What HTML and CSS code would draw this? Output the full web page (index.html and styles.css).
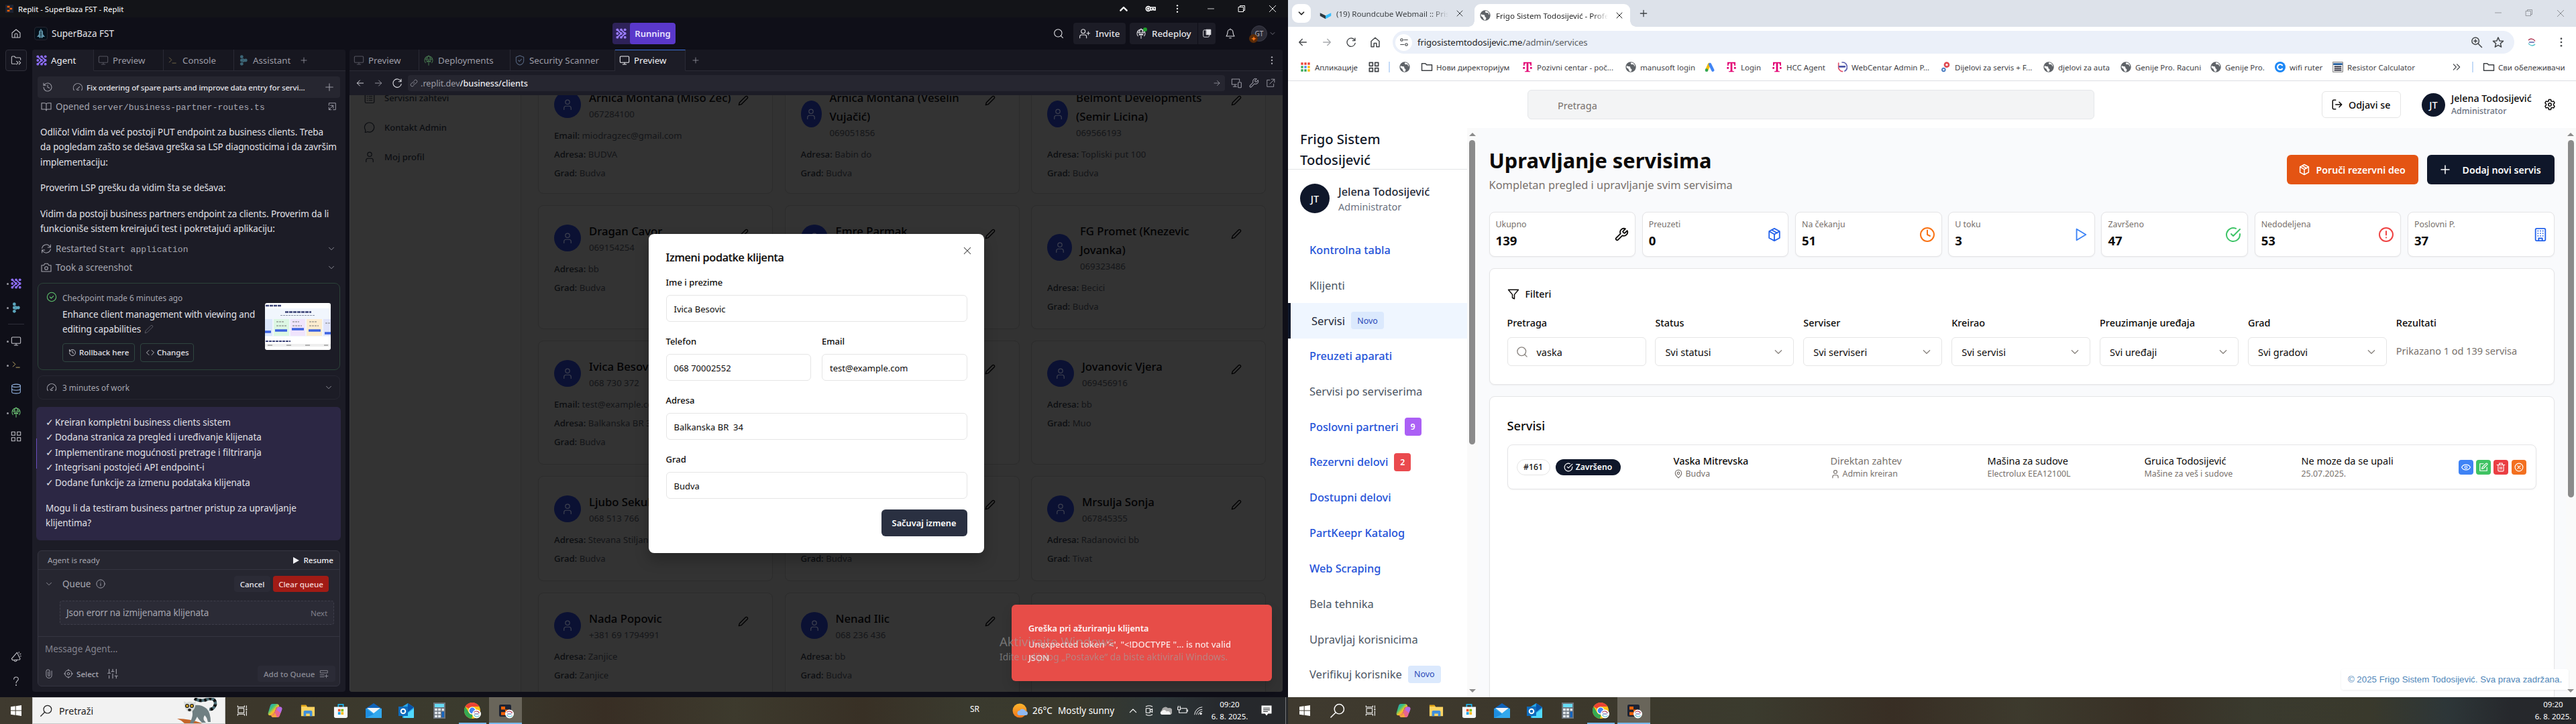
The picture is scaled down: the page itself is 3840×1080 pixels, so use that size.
FILE: index.html
```html
<!DOCTYPE html>
<html lang="sr">
<head>
<meta charset="utf-8">
<title>Desktop</title>
<link rel="stylesheet" href="styles.css">
</head>
<body>
<svg class="defs" width="0" height="0">
  <defs>
    <linearGradient id="gCop" x1="0" y1="0" x2="1" y2="1"><stop offset="0" stop-color="#1b8fe8"/><stop offset=".35" stop-color="#3fc27a"/><stop offset=".55" stop-color="#f7c325"/><stop offset=".8" stop-color="#f2557a"/><stop offset="1" stop-color="#b455e0"/></linearGradient>
    <linearGradient id="gSun" x1="0" y1="0" x2="0" y2="1"><stop offset="0" stop-color="#fcb52c"/><stop offset="1" stop-color="#f0761c"/></linearGradient>
  </defs>
  <symbol id="home" viewBox="0 0 24 24"><path d="M3 10.5 12 3l9 7.500V20a1 1 0 0 1-1 1H4a1 1 0 0 1-1-1zM9 21v-6a3 3 0 0 1 6 0v6"/></symbol>
  <symbol id="homec" viewBox="0 0 24 24"><path d="M4 10 12 3l8 7v11h-5.500v-7h-5v7H4z"/></symbol>
  <symbol id="folder2" viewBox="0 0 24 24"><path d="M11 20H4a2 2 0 0 1-2-2V5a2 2 0 0 1 2-2h4l3 3h9a2 2 0 0 1 2 2v3M13 14l3.500 3.500L13 21M18.500 14l3.500 3.500-3.500 3.500"/></symbol>
  <symbol id="folder" viewBox="0 0 24 24"><path d="M2 19V5h7l2.500 2.500H22V19z"/></symbol>
  <symbol id="agent" viewBox="0 0 24 24"><g fill="currentColor" stroke="none"><circle cx="3.500" cy="3.500" r="2.900"/><circle cx="12" cy="3.500" r="2.900"/><circle cx="20.500" cy="3.500" r="2.900"/><circle cx="3.500" cy="12" r="2.900"/><circle cx="12" cy="12" r="2.900"/><circle cx="20.500" cy="12" r="2.900"/><circle cx="3.500" cy="20.500" r="2.900"/><circle cx="12" cy="20.500" r="2.900"/><circle cx="20.500" cy="20.500" r="2.900"/></g><path d="m3.500 3.500 8.500 8.500-8.500 8.500M12 3.500l8.500 8.500-8.500 8.500" stroke-width="3"/></symbol>
  <symbol id="assist" viewBox="0 0 24 24"><g fill="currentColor" stroke="none"><circle cx="8" cy="4" r="3.600"/><circle cx="8" cy="12" r="3.600"/><circle cx="8" cy="20" r="3.600"/><circle cx="17" cy="12" r="3.600"/><path d="M9 7c3 0 3 2 8 2v6c-5 0-5 2-8 2 3-3 3-7 0-10z"/></g></symbol>
  <symbol id="monitor" viewBox="0 0 24 24"><rect x="2" y="3" width="20" height="14" rx="2"/><path d="M8 21h8M12 17v4"/></symbol>
  <symbol id="console" viewBox="0 0 24 24"><path d="m4 17 6-6-6-6M12 19h9"/></symbol>
  <symbol id="db" viewBox="0 0 24 24"><ellipse cx="12" cy="5" rx="9.500" ry="3.300"/><path d="M2.500 5v14c0 1.800 4.200 3.300 9.500 3.300s9.500-1.500 9.500-3.300V5M2.500 12c0 1.800 4.200 3.300 9.500 3.300s9.500-1.500 9.500-3.300"/></symbol>
  <symbol id="deploy" viewBox="0 0 24 24"><path d="M12 12v11M8.500 15.500 12 12l3.500 3.500M5 17.500a9 9 0 1 1 14 0M3.500 9.500h17M12 1.500c-5 5-5 10-3.500 14M12 1.500c5 5 5 10 3.500 14"/></symbol>
  <symbol id="grid4" viewBox="0 0 24 24"><rect x="2" y="2" width="7.500" height="7.500"/><rect x="14.500" y="2" width="7.500" height="7.500"/><rect x="2" y="14.500" width="7.500" height="7.500"/><rect x="14.500" y="14.500" width="7.500" height="7.500"/></symbol>
  <symbol id="horn" viewBox="0 0 24 24"><path d="M14 2 2 16l2 3 16-1 1-2zM7 19c1 4 6 4 7 0M18 3l.5-2M20.500 6l2-1M21 10h2"/></symbol>
  <symbol id="help" viewBox="0 0 24 24"><path d="M7 8c0-6 10-7 10-.5 0 4-5 4-5 9"/><circle cx="12" cy="21" r=".6" fill="currentColor"/></symbol>
  <symbol id="plus" viewBox="0 0 24 24"><path d="M12 4v16M4 12h16"/></symbol>
  <symbol id="history" viewBox="0 0 24 24"><path d="M3 12a9 9 0 1 0 3-6.700L3 8M3 3v5h5M12 7v5l4 2"/></symbol>
  <symbol id="gauge" viewBox="0 0 24 24"><path d="M3.500 19a10 10 0 1 1 17 0M11 16l5-5M9 16a3 3 0 0 0 5 2"/></symbol>
  <symbol id="book" viewBox="0 0 24 24"><path d="M12 6v15M12 6c-1-2-2-2-4-2H1.500v14H9c2 0 3 1 3 3 0-2 1-3 3-3h7.500V4H16c-2 0-3 0-4 2z"/></symbol>
  <symbol id="openbox" viewBox="0 0 24 24"><path d="M4 9V3h17v17h-6M8 9h7v7M15 9 4 20M4 14v6h6"/></symbol>
  <symbol id="refresh" viewBox="0 0 24 24"><path d="M2.500 11a9.500 9.500 0 0 1 16.500-5l2.500 3M21.500 3v6h-6M21.500 13a9.500 9.500 0 0 1-16.500 5l-2.500-3M2.500 21v-6h6"/></symbol>
  <symbol id="camera" viewBox="0 0 24 24"><path d="M1.500 7h5l2-3.500h7l2 3.500h5v14h-21z"/><circle cx="12" cy="13.500" r="3.500"/></symbol>
  <symbol id="down" viewBox="0 0 24 24"><path d="m5 8.500 7 7 7-7"/></symbol>
  <symbol id="up" viewBox="0 0 24 24"><path d="m5 16 7-7 7 7"/></symbol>
  <symbol id="okc" viewBox="0 0 24 24"><circle cx="12" cy="12" r="10"/><path d="m8 12 3 3 5-5"/></symbol>
  <symbol id="pencil" viewBox="0 0 24 24"><path d="M17 3a2.800 2.800 0 1 1 4 4L7.500 20.500 2 22l1.500-5.500z"/></symbol>
  <symbol id="code" viewBox="0 0 24 24"><path d="m8 5-7 7 7 7M16 5l7 7-7 7"/></symbol>
  <symbol id="info" viewBox="0 0 24 24"><circle cx="12" cy="12" r="10.500"/><path d="M12 11v6M12 7v.5"/></symbol>
  <symbol id="clip" viewBox="0 0 24 24"><path d="M19 5v11a7 7 0 0 1-14 0V6a4.500 4.500 0 0 1 9 0v10a2 2 0 0 1-4 0V7"/></symbol>
  <symbol id="target" viewBox="0 0 24 24"><circle cx="12" cy="12" r="9"/><circle cx="12" cy="12" r="3"/><path d="M12 1v3M12 20v3M1 12h3M20 12h3"/></symbol>
  <symbol id="sliders" viewBox="0 0 24 24"><path d="M4 2v9M4 16v6M12 2v5M12 12v10M20 2v10M20 17v5M1 11h6M9 7h6M17 17h6"/></symbol>
  <symbol id="addq" viewBox="0 0 24 24"><path d="M3 4h18v6H3zM2 15h10M2 20h10M18 14v8M14 18h8"/></symbol>
  <symbol id="search" viewBox="0 0 24 24"><circle cx="11" cy="11" r="8.500"/><path d="m21.500 21.500-4.500-4.500"/></symbol>
  <symbol id="tsearch" viewBox="0 0 24 24"><circle cx="14.500" cy="9.500" r="7.800"/><path d="M9 15 1 23"/></symbol>
  <symbol id="user" viewBox="0 0 24 24"><path d="M19 22v-3a4 4 0 0 0-4-4H9a4 4 0 0 0-4 4v3"/><circle cx="12" cy="7" r="4.200"/></symbol>
  <symbol id="userp" viewBox="0 0 24 24"><path d="M1 22v-3a4 4 0 0 1 4-4h7a4 4 0 0 1 4 4v3M20 8v7M16.500 11.500h7"/><circle cx="8.500" cy="7" r="4.500"/></symbol>
  <symbol id="bell" viewBox="0 0 24 24"><path d="M6 9a6 6 0 0 1 12 0c0 6 3 8 3 9H3c0-1 3-3 3-9M10 22h4M12 1v2"/></symbol>
  <symbol id="docs" viewBox="0 0 24 24"><path d="M13 3H6a3 3 0 0 0-3 3v12a3 3 0 0 0 3 3h9a3 3 0 0 0 3-3v-3"/><path d="M11 2h11v13H11z" fill="currentColor"/></symbol>
  <symbol id="shield" viewBox="0 0 24 24"><path d="M12 1.500 3.500 5v8c0 5 4 8 8.500 9.500 4.500-1.500 8.500-4.500 8.500-9.500V5zM8.500 12l2.500 2.500 4.500-5"/></symbol>
  <symbol id="left" viewBox="0 0 24 24"><path d="M20 12H4M11 5l-7 7 7 7"/></symbol>
  <symbol id="right" viewBox="0 0 24 24"><path d="M4 12h16M13 5l7 7-7 7"/></symbol>
  <symbol id="reload" viewBox="0 0 24 24"><path d="M20.500 8a9.300 9.300 0 1 0 .8 6M21 3v5.500h-5.500"/></symbol>
  <symbol id="link" viewBox="0 0 24 24"><path d="M10 14a4.500 4.500 0 0 0 6.500 0l4-4A4.600 4.600 0 0 0 14 3.500l-2 2M14 10a4.500 4.500 0 0 0-6.500 0l-4 4A4.600 4.600 0 0 0 10 20.500l2-2"/></symbol>
  <symbol id="devices" viewBox="0 0 24 24"><path d="M13 15H2V3h17v5M5 20h8M9 15v5"/><rect x="16" y="10" width="7" height="12" rx="1.500"/></symbol>
  <symbol id="wrench" viewBox="0 0 24 24"><path d="M14.700 6.300a1 1 0 0 0 0 1.400l1.600 1.600a1 1 0 0 0 1.400 0l3.770-3.770a6 6 0 0 1-7.940 7.940l-6.910 6.910a2.120 2.120 0 0 1-3-3l6.910-6.910a6 6 0 0 1 7.940-7.940z"/></symbol>
  <symbol id="ext" viewBox="0 0 24 24"><path d="M10 4H3v17h17v-7M14 2h8v8M22 2 10 14"/></symbol>
  <symbol id="vdots" viewBox="0 0 24 24"><g fill="currentColor" stroke="none"><circle cx="12" cy="4" r="2"/><circle cx="12" cy="12" r="2"/><circle cx="12" cy="20" r="2"/></g></symbol>
  <symbol id="x" viewBox="0 0 24 24"><path d="M4 4l16 16M20 4 4 20"/></symbol>
  <symbol id="min" viewBox="0 0 24 24"><path d="M3 12h18"/></symbol>
  <symbol id="restore" viewBox="0 0 24 24"><path d="M3 7h14v14H3zM7 7V3h14v14h-4"/></symbol>
  <symbol id="key" viewBox="0 0 24 24"><circle cx="7" cy="12" r="5"/><circle cx="7" cy="12" r="1.500"/><path d="M12 9h11v6h-4v-3h-3v3h-4"/></symbol>
  <symbol id="list" viewBox="0 0 24 24"><rect x="3" y="3" width="18" height="19" rx="2"/><path d="M7 9h1M11 9h6M7 13h1M11 13h6M7 17h1M11 17h6"/></symbol>
  <symbol id="chat" viewBox="0 0 24 24"><path d="M3 22c1-2 1-3 .5-5A9.500 9.500 0 1 1 8 20.700c-2 1-3 1.300-5 1.300z"/></symbol>
  <symbol id="box" viewBox="0 0 24 24"><path d="M12 2 3.500 6.500v11L12 22l8.500-4.500v-11zM3.500 6.500 12 11.500l8.500-5M12 11.500V22M7.500 4.300l9 5"/></symbol>
  <symbol id="clock" viewBox="0 0 24 24"><circle cx="12" cy="12" r="10"/><path d="M12 5.500V12l4 2"/></symbol>
  <symbol id="play" viewBox="0 0 24 24"><path d="M5 3 20 12 5 21z"/></symbol>
  <symbol id="okopen" viewBox="0 0 24 24"><path d="M22 11v1a10 10 0 1 1-6-9.100M22 4 12 14l-3-3"/></symbol>
  <symbol id="alert" viewBox="0 0 24 24"><circle cx="12" cy="12" r="10"/><path d="M12 7v5.500M12 16.300v.3"/></symbol>
  <symbol id="build" viewBox="0 0 24 24"><rect x="4" y="2" width="16" height="20" rx="2"/><path d="M9 22v-4h6v4M8 6h.01M12 6h.01M16 6h.01M8 10h.01M12 10h.01M16 10h.01M8 14h.01M12 14h.01M16 14h.01"/></symbol>
  <symbol id="funnel" viewBox="0 0 24 24"><path d="M22 3H2l8 9.500V19l4 2v-8.500z"/></symbol>
  <symbol id="logout" viewBox="0 0 24 24"><path d="M9 21H5a2 2 0 0 1-2-2V5a2 2 0 0 1 2-2h4M16 17l5-5-5-5M21 12H9"/></symbol>
  <symbol id="gear" viewBox="0 0 24 24"><path d="M10 2h4l.6 3 2 1.200 2.900-1 2 3.500L19.300 11v2l2.200 2.300-2 3.500-2.900-1-2 1.200-.6 3h-4l-.6-3-2-1.200-2.900 1-2-3.500L4.700 13v-2L2.500 8.700l2-3.500 2.900 1 2-1.200z"/><circle cx="12" cy="12" r="3"/></symbol>
  <symbol id="pin" viewBox="0 0 24 24"><path d="M20 10c0 6-8 12-8 12s-8-6-8-12a8 8 0 0 1 16 0z"/><circle cx="12" cy="10" r="3"/></symbol>
  <symbol id="eye" viewBox="0 0 24 24"><path d="M1 12c4-9 18-9 22 0-4 9-18 9-22 0z"/><circle cx="12" cy="12" r="3"/></symbol>
  <symbol id="edit" viewBox="0 0 24 24"><path d="M12 3H3v18h18v-9M18.500 2.500a2 2 0 0 1 3 3L12 15l-4 1 1-4z"/></symbol>
  <symbol id="trash" viewBox="0 0 24 24"><path d="M2 6h20M19 6v14a2 2 0 0 1-2 2H7a2 2 0 0 1-2-2V6M8 6V2h8v4M10 11v6M14 11v6"/></symbol>
  <symbol id="xc" viewBox="0 0 24 24"><circle cx="12" cy="12" r="10"/><path d="m8.500 8.500 7 7M15.500 8.500l-7 7"/></symbol>
  <symbol id="tune" viewBox="0 0 24 24"><circle cx="6" cy="6" r="3"/><path d="M12 6h9M3 18h9"/><circle cx="18" cy="18" r="3"/></symbol>
  <symbol id="zoomin" viewBox="0 0 24 24"><circle cx="9.500" cy="9.500" r="7"/><path d="m15 15 7 7M9.500 6.500v6M6.500 9.500h6"/></symbol>
  <symbol id="star" viewBox="0 0 24 24"><path d="m12 2.500 2.800 6.700 7.200.6-5.500 4.700 1.700 7L12 17.700l-6.200 3.800 1.700-7L2 9.800l7.200-.6z"/></symbol>
  <symbol id="dbl" viewBox="0 0 24 24"><path d="m4 5 7 7-7 7M13 5l7 7-7 7"/></symbol>
  <symbol id="globe" viewBox="0 0 24 24"><circle cx="12" cy="12" r="11.500" fill="#5f6368" stroke="none"/><path d="M3 9c4 3 8 0 8 4s4 2 3 6-3 4-5 2-1-5-4-6S2 12 3 9zM13 2c-3 2 0 5 3 4s3 3 5 5c1-4-3-9-8-9z" fill="#fff" stroke="none"/></symbol>
  <symbol id="tmob" viewBox="0 0 24 24"><path d="M3 1h18v8h-2.500c0-4-1-5.500-4.500-5.500V18c0 3 1 3.500 4 3.500V23H6v-1.500c3 0 4-.5 4-3.500V3.500C6.500 3.500 5.500 5 5.500 9H3zM2 12h4v4H2zM18 12h4v4h-4z" fill="#e20074" stroke="none"/></symbol>
  <symbol id="fst" viewBox="0 0 24 24"><path d="M12 1.500A10.500 10.500 0 0 1 18 21" stroke="#5a5fae" stroke-width="2.500"/><path d="M4 3v7a10 10 0 0 0 9 12" stroke="#e0526c" stroke-width="2.500"/><path d="M6 11h12" stroke="#4a56a8" stroke-width="4" stroke-dasharray="3 1.500"/></symbol>
  <symbol id="fstc" viewBox="0 0 24 24"><circle cx="12" cy="12" r="12" fill="#fff" stroke="none"/><path d="M5 7c4-4 11-3 14 2" stroke="#b0304c" stroke-width="2"/><path d="M19 17c-4 4-11 3-14-2" stroke="#4fc0c8" stroke-width="2"/><path d="M7 12h10" stroke="#8088c0" stroke-width="3" stroke-dasharray="2.500 1"/></symbol>
  <symbol id="gears" viewBox="0 0 24 24"><circle cx="15" cy="7" r="4.500" stroke="#e04a50" stroke-width="4" stroke-dasharray="3 1"/><circle cx="8" cy="18" r="3.500" stroke="#4a7cc0" stroke-width="3" stroke-dasharray="2.500 1"/></symbol>
  <symbol id="ads" viewBox="0 0 24 24"><path d="M5 18 10.500 6" stroke="#fbbc04" stroke-width="6.500"/><path d="M12 6l6.500 13" stroke="#4285f4" stroke-width="6.500"/><circle cx="4.500" cy="19" r="3.500" fill="#34a853" stroke="none"/></symbol>
  <symbol id="apps9" viewBox="0 0 24 24"><g stroke="none"><path d="M2 2h5v5H2zM9.500 2h5v5h-5zM17 2h5v5h-5z" fill="#ea4335"/><path d="M2 9.500h5v5H2z" fill="#34a853"/><path d="M9.500 9.500h5v5h-5z" fill="#4285f4"/><path d="M17 9.500h5v5h-5zM17 17h5v5h-5z" fill="#fbbc04"/><path d="M2 17h5v5H2zM9.500 17h5v5h-5z" fill="#34a853"/></g></symbol>
  <symbol id="cic" viewBox="0 0 24 24"><circle cx="12" cy="12" r="12" fill="#1e88f5" stroke="none"/><path d="M16.500 8a6 6 0 1 0 0 8" stroke="#fff" stroke-width="3.200"/></symbol>
  <symbol id="calc2" viewBox="0 0 24 24"><rect x="1" y="1" width="22" height="22" fill="#f4f4f4" stroke="#777" stroke-width="1.500"/><path d="M3.500 5.500h17" stroke="#1f5c9e" stroke-width="4"/><path d="M5 11h14M5 15h14M5 19h14" stroke="#223" stroke-width="2.500" stroke-dasharray="2.500 1.500"/></symbol>
  <symbol id="rcube" viewBox="0 0 24 24"><path d="M1 11 12 16v7L1 17z" fill="#2f3a40" stroke="none"/><path d="M23 11 12 16v7l11-6z" fill="#37beff" stroke="none"/><path d="M5 9a7.500 7.500 0 0 1 14 0l-1 4-6 3-6-3z" fill="#dfe3e6" stroke="none"/></symbol>
  <symbol id="repl" viewBox="0 0 24 24"><path d="M4 2h9v6H4zM13 9h9v6h-9zM4 16h9v6H4z" fill="#f26207" stroke="none"/></symbol>
  <symbol id="win" viewBox="0 0 24 24"><path d="M0 3.400 10 2v9.400H0zM11.500 1.800 24 0v11.400H11.500zM0 12.700h10V22L0 20.600zM11.500 12.700H24V24l-12.500-1.800z" fill="#fff" stroke="none"/></symbol>
  <symbol id="tview" viewBox="0 0 24 24"><path d="M3 7h13v10H3zM2 1v3h15V1M2 23v-3h15v3M21.500 1v5M21.500 13v10"/><path d="M20 8h3v3h-3z" fill="currentColor" stroke="none"/></symbol>
  <symbol id="copilot" viewBox="0 0 24 24"><path d="M8 1h7c2 0 3 1 3.500 3L19 6c-4 0-5 1-6 4l-2 7c-1 2-2 3-4 3H4c-3 0-4-2-3-5L4 5c.7-3 2-4 4-4z" fill="url(#gCop)" stroke="none"/><path d="M16 23H9c-2 0-3-1-3.500-3 4 0 5-2 6-5l2-6c1-2 2-3 4-3h2.500c3 0 4 2 3 5l-3 8c-.7 3-2 4-4 4z" fill="#e8648f" stroke="none"/><path d="M17 6h3c3 0 4 2 3 5l-2 5-6-5z" fill="#b36be6" stroke="none"/><path d="M6 20c4 0 5-2 6-5l3 8H9c-2 0-2.500-1-3-3z" fill="#f8a33c" stroke="none"/></symbol>
  <symbol id="files" viewBox="0 0 24 24"><path d="M1 3h8l2 3h12v15H1z" fill="#fcd462" stroke="none"/><path d="M1 3h8l1.500 2.500H1z" fill="#e3a514" stroke="none"/><path d="M5 21v-7q0-2 2-2h10q2 0 2 2v7h-4v-4H9v4z" fill="#3f8fdc" stroke="none"/></symbol>
  <symbol id="store" viewBox="0 0 24 24"><path d="M8 6V2h8v4" stroke="#1fb0e8" stroke-width="2"/><path d="M1 6h22v15q0 3-3 3H4q-3 0-3-3z" fill="#f5f8fa" stroke="none"/><path d="M7.500 9.500h4v4h-4z" fill="#f25022" stroke="none"/><path d="M12.500 9.500h4v4h-4z" fill="#7fba00" stroke="none"/><path d="M7.500 14.500h4v4h-4z" fill="#00a4ef" stroke="none"/><path d="M12.500 14.500h4v4h-4z" fill="#ffb900" stroke="none"/></symbol>
  <symbol id="mail" viewBox="0 0 24 24"><path d="M0 9 12 1l12 8z" fill="#0f62b8" stroke="none"/><path d="M0 9h24v14H0z" fill="#32a8ee" stroke="none"/><path d="M2 8h20l-10 8z" fill="#f0f4f8" stroke="none"/><path d="M0 9l12 8.500L0 23z" fill="#1d8de0" stroke="none"/></symbol>
  <symbol id="outlook" viewBox="0 0 24 24"><path d="m6 6 8-5 9 6v15q0 1-1 1H6z" fill="#28a8ea" stroke="none"/><path d="M23 9 8 20v3h14q1 0 1-1z" fill="#50d9ff" stroke="none"/><path d="M14 1l9 6-10 8z" fill="#0a53a8" stroke="none"/><path d="M0 6h14v14H0z" fill="#0f6cbd" stroke="none"/><circle cx="7" cy="13" r="3.300" stroke="#fff" stroke-width="2"/></symbol>
  <symbol id="calc" viewBox="0 0 24 24"><path d="M3 0h18v24H3z" fill="#6b737c" stroke="none"/><path d="M5 2h14v5H5z" fill="#67dcf4" stroke="none"/><path d="M5 10.500h10M5 15.500h10M5 20.500h10" stroke="#dfe5ea" stroke-width="3.500" stroke-linecap="butt" stroke-dasharray="4 1"/><path d="M15.500 13.500h3.500v8.500h-3.500z" fill="#1565c0" stroke="none"/><path d="M15.500 9h3.500v3.500h-3.500z" fill="#dfe5ea" stroke="none"/></symbol>
  <symbol id="chrome" viewBox="0 0 24 24"><circle cx="12" cy="12" r="12" fill="#fbc116" stroke="none"/><path d="M1.600 6a12 12 0 0 1 20.800 0H12a6 6 0 0 0-5.200 3z" fill="#ea4335" stroke="none"/><path d="M1.600 6 6.800 15a6 6 0 0 0 6 3L11 24A12 12 0 0 1 1.600 6z" fill="#34a853" stroke="none"/><circle cx="12" cy="12" r="5.600" fill="#fff" stroke="none"/><circle cx="12" cy="12" r="4.400" fill="#4285f4" stroke="none"/></symbol>
  <symbol id="replapp" viewBox="0 0 24 24"><rect x="0" y="0" width="24" height="24" rx="3" fill="#1c2333" stroke="none"/><path d="M4 4h8v6H4zM12 10h8v5h-8zM4 15h8v6H4z" fill="#f26207" stroke="none"/></symbol>
  <symbol id="cam2" viewBox="0 0 24 24"><path d="M5 3q7-4 14 0M5 21q7 4 14 0M5 7h9v10H5zM14 11l5-3v8l-5-3"/></symbol>
  <symbol id="cloud" viewBox="0 0 24 24"><path d="M5 20a5 5 0 0 1-1-9 7 7 0 0 1 12-4 6 6 0 0 1 5 13z" fill="#a8a8a8" stroke="none"/><path d="M4 20c-4-1-4-6 0-6.500C6 9 12 10 13 14c4-2 9 1 8 6z" fill="#f4f4f4" stroke="none"/></symbol>
  <symbol id="batt" viewBox="0 0 24 24"><path d="M9 7h12v10H9M23 10v4M1 5v5h6V5M2 2v3M6 2v3M4 10v7h4"/></symbol>
  <symbol id="wifi" viewBox="0 0 24 24"><path d="M3 22A20 20 0 0 1 22 3M8 22A14 14 0 0 1 22 9M13 22a9 9 0 0 1 9-8"/><circle cx="19" cy="20" r="2" fill="currentColor"/></symbol>
  <symbol id="notif" viewBox="0 0 24 24"><path d="M2 2h20v16h-7l-3 4-3-4H2z" fill="#fff" stroke="none"/><path d="M6 7h12M6 10.500h12M6 14h8" stroke="#26282b" stroke-width="1.500"/></symbol>
</svg>

<div class="desk">
<!-- ============ Left monitor ============ -->
<div class="screen left">
  <div class="tbar">
    <span class="rlogo"><svg class="i s10"><use href="#repl"/></svg></span>
    <span class="ttl">Replit - SuperBaza FST - Replit</span>
    <div class="wc"><svg class="i s16 bold"><use href="#up"/></svg><svg class="i s16 w25"><use href="#key"/></svg><svg class="i s14"><use href="#vdots"/></svg><svg class="i s12"><use href="#min"/></svg><svg class="i s12 w2"><use href="#restore"/></svg><svg class="i s14"><use href="#x"/></svg></div>
  </div>
  <div class="rhead">
    <svg class="i s16 hh"><use href="#home"/></svg>
    <span class="plogo"><svg width="14" height="16" viewBox="0 0 14 16"><path d="M7 1 4 5v4l-3 4h3l1 2 2-1 2 1 1-2h3l-3-4V5z" fill="#5f93a8"/><path d="M7 3v11M5.500 7h3M5.500 10h3" stroke="#1b3442"/></svg></span>
    <span class="pname">SuperBaza FST</span>
    <div class="run"><span class="ra"><svg class="i s16"><use href="#agent"/></svg></span><span class="rb">Running</span></div>
    <div class="ract">
      <svg class="i s16 ms"><use href="#search"/></svg>
      <span class="rbtn inv"><svg class="i s16"><use href="#userp"/></svg>Invite</span>
      <span class="rbtn red"><svg class="i s16"><use href="#deploy"/></svg>Redeploy<b class="gdot"></b></span>
      <span class="rbtn doc"><svg class="i s14"><use href="#docs"/></svg></span>
      <svg class="i s16 bl"><use href="#bell"/></svg>
      <span class="gt">GT<b>✦</b></span>
      <svg class="i s10 gc"><use href="#down"/></svg>
    </div>
  </div>
  <div class="rbody">
    <div class="rail">
      <span class="railtop"><svg class="i s16"><use href="#folder2"/></svg></span>
      <div class="rail1">
        <span class="ri d c1"><svg class="i s16"><use href="#agent"/></svg></span>
        <span class="ri d c2"><svg class="i s16"><use href="#assist"/></svg></span>
      </div>
      <hr>
      <div class="rail2">
        <span class="ri d"><svg class="i s16"><use href="#monitor"/></svg></span>
        <span class="ri d c3"><svg class="i s14"><use href="#console"/></svg></span>
        <span class="ri c4"><svg class="i s16"><use href="#db"/></svg></span>
        <span class="ri d c5"><svg class="i s16"><use href="#deploy"/></svg></span>
        <span class="ri"><svg class="i s16"><use href="#grid4"/></svg></span>
      </div>
      <div class="rail3">
        <span class="ri"><svg class="i s16"><use href="#horn"/></svg></span>
        <span class="ri"><svg class="i s16"><use href="#help"/></svg></span>
      </div>
    </div>

    <section class="chat">
      <div class="tabs">
        <span class="tab on a1"><svg class="i s16 c1"><use href="#agent"/></svg>Agent</span>
        <span class="tab a2"><svg class="i s16 dim"><use href="#monitor"/></svg>Preview</span>
        <span class="tab a3"><svg class="i s14 c3 dm"><use href="#console"/></svg>Console</span>
        <span class="tab a4"><svg class="i s16 c2 dm"><use href="#assist"/></svg>Assistant<svg class="i s12 pl"><use href="#plus"/></svg></span>
      </div>
      <div class="hist"><svg class="i s16"><use href="#history"/></svg><svg class="i s16 hg"><use href="#gauge"/></svg><b>Fix ordering of spare parts and improve data entry for servi...</b><svg class="i s16"><use href="#plus"/></svg></div>
      <div class="act o1"><svg class="i s16"><use href="#book"/></svg><span>Opened <code>server/business-partner-routes.ts</code></span><svg class="i s14 r"><use href="#openbox"/></svg></div>
      <p class="p1">Odličo! Vidim da već postoji PUT endpoint za business clients. Treba<br>da pogledam zašto se dešava greška sa LSP diagnosticima i da završim<br>implementaciju:</p>
      <p class="p2">Proverim LSP grešku da vidim šta se dešava:</p>
      <p class="p3">Vidim da postoji business partners endpoint za clients. Proverim da li<br>funkcioniše sistem kreirajući test i pokretajući aplikaciju:</p>
      <div class="act o2"><svg class="i s16"><use href="#refresh"/></svg><span>Restarted <code>Start application</code></span><svg class="i s12 r"><use href="#down"/></svg></div>
      <div class="act o3"><svg class="i s16"><use href="#camera"/></svg><span>Took a screenshot</span><svg class="i s12 r"><use href="#down"/></svg></div>
      <div class="cp">
        <svg class="i s16 grn"><use href="#okc"/></svg>
        <div class="cpt">
          <small>Checkpoint made 6 minutes ago</small>
          <div class="cph">Enhance client management with viewing and<br>editing capabilities <svg class="i s14 pen"><use href="#pencil"/></svg></div>
          <div class="cpb"><span class="b1"><svg class="i s12"><use href="#history"/></svg>Rollback here</span><span class="b2"><svg class="i s12"><use href="#code"/></svg>Changes</span></div>
        </div>
        <svg class="thumb" width="98" height="70" viewBox="0 0 98 70"><rect width="98" height="70" rx="3" fill="#fff"/><rect y="8" width="98" height="42" fill="#f1f6fd"/><path d="M1 4h24M30 13.500h39" stroke="#3b4377" stroke-width="2.500" stroke-dasharray="5 1"/><path d="M23 18.500h52" stroke="#8b93a8" stroke-dasharray="3 1"/><rect y="24" width="11" height="25" fill="#dbe7fb"/><rect x="13" y="24" width="23" height="25" fill="#dcf7e3"/><rect x="38" y="24" width="22" height="25" fill="#f0e4fc"/><rect x="62" y="24" width="23" height="25" fill="#fdeccf"/><rect x="87" y="24" width="11" height="25" fill="#e0e4fb"/><path d="M0 43h9M15 41h18M40 39h18M65 41h18M89 45h9" stroke="#3b62e0" stroke-width="3.500"/><path d="M17 28h12M41 28h10M66 28h12M90 30h7M17 34h15M41 34h14M66 34h14" stroke="#777" stroke-width="1" stroke-dasharray="3 1"/><path d="M1 57h37" stroke="#3b4377" stroke-width="2" stroke-dasharray="4 1"/><rect y="61" width="98" height="4" fill="#eee"/><path d="M4 63h7M32 63h7M60 63h7M88 63h6" stroke="#777"/></svg>
      </div>
      <div class="work"><svg class="i s16"><use href="#gauge"/></svg>3 minutes of work<svg class="i s12 r"><use href="#down"/></svg></div>
      <div class="purple"><ul><li>Kreiran kompletni business clients sistem</li><li>Dodana stranica za pregled i uređivanje klijenata</li><li>Implementirane mogućnosti pretrage i filtriranja</li><li>Integrisani postojeći API endpoint-i</li><li>Dodane funkcije za izmenu podataka klijenata</li></ul><div>Mogu li da testiram business partner pristup za upravljanje<br>klijentima?</div></div>
      <div class="queue">
        <div class="q1"><span>Agent is ready</span><b><i></i>Resume</b></div>
        <div class="q2"><svg class="i s12"><use href="#down"/></svg><span>Queue</span><svg class="i s14"><use href="#info"/></svg><em class="can">Cancel</em><em class="clr">Clear queue</em></div>
        <div class="q3"><span>Json erorr na izmijenama klijenata</span><small>Next</small></div>
        <div class="q4">
          <span class="msg">Message Agent...</span>
          <div class="q5"><svg class="i s14"><use href="#clip"/></svg><svg class="i s14 tg"><use href="#target"/></svg><b>Select</b><svg class="i s16 sl"><use href="#sliders"/></svg><span class="aq">Add to Queue<svg class="i s14"><use href="#addq"/></svg></span></div>
        </div>
      </div>
    </section>

    <section class="prev">
      <div class="tabs">
        <span class="tab e1"><svg class="i s16 dim"><use href="#monitor"/></svg>Preview</span>
        <span class="tab e2"><svg class="i s16 c5 dm"><use href="#deploy"/></svg>Deployments</span>
        <span class="tab e3"><svg class="i s16 shd"><use href="#shield"/></svg>Security Scanner</span>
        <span class="tab on e4"><svg class="i s16"><use href="#monitor"/></svg>Preview</span>
        <span class="tplus"><svg class="i s12"><use href="#plus"/></svg></span>
        <svg class="i s14 td"><use href="#vdots"/></svg>
      </div>
      <div class="urlb">
        <svg class="i s14"><use href="#left"/></svg><svg class="i s14 g"><use href="#right"/></svg><svg class="i s16"><use href="#reload"/></svg>
        <div class="url"><svg class="i s12"><use href="#link"/></svg><span>.replit.dev<b>/business/clients</b></span><svg class="i s12 ur"><use href="#right"/></svg></div>
        <svg class="i s16 g"><use href="#devices"/></svg><svg class="i s16 g"><use href="#wrench"/></svg><svg class="i s14 g"><use href="#ext"/></svg>
      </div>
      <div class="view">
        <div class="side">
          <span><svg class="i s18"><use href="#list"/></svg>Servisni zahtevi</span>
          <span><svg class="i s18"><use href="#chat"/></svg>Kontakt Admin</span>
          <span><svg class="i s18"><use href="#user"/></svg>Moj profil</span>
        </div>
        <div class="cards">
          <div class="card"><div class="ch"><i class="av"><svg class="i s18"><use href="#user"/></svg></i><div class="nm"><h4>Arnica Montana (Miso Zec)</h4><small>067284100</small></div><svg class="i s16 pn"><use href="#pencil"/></svg></div><p><b>Email:</b> miodragzec@gmail.com</p><p><b>Adresa:</b> BUDVA</p><p><b>Grad:</b> Budva</p></div>
          <div class="card"><div class="ch"><i class="av n31"><svg class="i s18"><use href="#user"/></svg></i><div class="nm"><h4>Arnica Montana (Veselin<br>Vujačić)</h4><small>069051856</small></div><svg class="i s16 pn"><use href="#pencil"/></svg></div><p><b>Adresa:</b> Babin do</p><p><b>Grad:</b> Budva</p></div>
          <div class="card"><div class="ch"><i class="av n31"><svg class="i s18"><use href="#user"/></svg></i><div class="nm"><h4>Belmont Developments<br>(Semir Licina)</h4><small>069566193</small></div><svg class="i s16 pn"><use href="#pencil"/></svg></div><p><b>Adresa:</b> Topliski put 100</p><p><b>Grad:</b> Budva</p></div>

          <div class="card"><div class="ch"><i class="av"><svg class="i s18"><use href="#user"/></svg></i><div class="nm"><h4>Dragan Cavor</h4><small>069154254</small></div><svg class="i s16 pn"><use href="#pencil"/></svg></div><p><b>Adresa:</b> bb</p><p><b>Grad:</b> Budva</p></div>
          <div class="card"><div class="ch"><i class="av"><svg class="i s18"><use href="#user"/></svg></i><div class="nm"><h4>Emre Parmak</h4><small>&nbsp;</small></div><svg class="i s16 pn"><use href="#pencil"/></svg></div></div>
          <div class="card"><div class="ch"><i class="av n37"><svg class="i s18"><use href="#user"/></svg></i><div class="nm"><h4>FG Promet (Knezevic<br>Jovanka)</h4><small>069323486</small></div><svg class="i s16 pn"><use href="#pencil"/></svg></div><p><b>Adresa:</b> Becici</p><p><b>Grad:</b> Budva</p></div>

          <div class="card"><div class="ch"><i class="av"><svg class="i s18"><use href="#user"/></svg></i><div class="nm"><h4>Ivica Besovic</h4><small>068 730 372</small></div></div><p><b>Email:</b> test@example.com</p><p><b>Adresa:</b> Balkanska BR 34</p><p><b>Grad:</b> Budva</p></div>
          <div class="card"><div class="ch"><div class="nm"><h4>&nbsp;</h4></div><svg class="i s16 pn"><use href="#pencil"/></svg></div></div>
          <div class="card"><div class="ch"><i class="av"><svg class="i s18"><use href="#user"/></svg></i><div class="nm"><h4>Jovanovic Vjera</h4><small>069456916</small></div><svg class="i s16 pn"><use href="#pencil"/></svg></div><p><b>Adresa:</b> bb</p><p><b>Grad:</b> Muo</p></div>

          <div class="card"><div class="ch"><i class="av"><svg class="i s18"><use href="#user"/></svg></i><div class="nm"><h4>Ljubo Sekulic</h4><small>068 513 766</small></div></div><p><b>Adresa:</b> Stevana Stiljanovica</p><p><b>Grad:</b> Budva</p></div>
          <div class="card"><div class="ch"><div class="nm"><h4>&nbsp;</h4><small>&nbsp;</small></div><svg class="i s16 pn"><use href="#pencil"/></svg></div><p>&nbsp;</p><p><b>Grad:</b> Budva</p></div>
          <div class="card"><div class="ch"><i class="av"><svg class="i s18"><use href="#user"/></svg></i><div class="nm"><h4>Mrsulja Sonja</h4><small>067845355</small></div><svg class="i s16 pn"><use href="#pencil"/></svg></div><p><b>Adresa:</b> Radanovici bb</p><p><b>Grad:</b> Tivat</p></div>

          <div class="card"><div class="ch"><i class="av"><svg class="i s18"><use href="#user"/></svg></i><div class="nm"><h4>Nada Popovic</h4><small>+381 69 1794991</small></div><svg class="i s16 pn"><use href="#pencil"/></svg></div><p><b>Adresa:</b> Zanjice</p><p><b>Grad:</b> Zanjice</p></div>
          <div class="card"><div class="ch"><i class="av"><svg class="i s18"><use href="#user"/></svg></i><div class="nm"><h4>Nenad Ilic</h4><small>068 236 436</small></div><svg class="i s16 pn"><use href="#pencil"/></svg></div><p><b>Adresa:</b> bb</p><p><b>Grad:</b> Budva</p></div>
          <div class="card"></div>
        </div>
      </div>
    </section>
  </div>

  <div class="modal">
    <svg class="i s14 mx"><use href="#x"/></svg>
    <h3>Izmeni podatke klijenta</h3>
    <div class="fld"><label>Ime i prezime</label><span>Ivica Besovic</span></div>
    <div class="two"><div class="fld"><label>Telefon</label><span>068 70002552</span></div><div class="fld"><label>Email</label><span>test@example.com</span></div></div>
    <div class="fld"><label>Adresa</label><span>Balkanska BR&nbsp; 34</span></div>
    <div class="fld"><label>Grad</label><span>Budva</span></div>
    <button>Sačuvaj izmene</button>
  </div>
  <div class="toast"><b>Greška pri ažuriranju klijenta</b><span>Unexpected token '&lt;', "&lt;!DOCTYPE "... is not valid<br>JSON</span></div>
  <div class="wm"><span>Aktivirajte Windows</span><small>Idite u dijalog „Postavke“ da biste aktivirali Windows.</small></div>

  <div class="task">
    <span class="tc w48"><svg class="i s16"><use href="#win"/></svg></span>
    <div class="tsb"><svg class="i s18"><use href="#tsearch"/></svg><span>Pretraži</span>
      <svg class="lemur" width="62" height="40" viewBox="0 0 62 40"><path d="M26 2q10 6 22 0 10 0 9 9-3 8-9 7" fill="none" stroke="#4a6a72" stroke-width="4.500"/><path d="M26 2q10 6 22 0 10 0 9 9-3 8-9 7" fill="none" stroke="#111" stroke-width="4.500" stroke-dasharray="3.500 4"/><path d="M0 32q20 0 40 8H12Q6 34 0 32z" fill="#c4662a"/><path d="M22 13q12-4 22 4 6 6 6 20h-4q-2-8-5-10-4 6 2 11h-6q-6-6-7-9-3 6-6 10h-5q4-9 4-14z" fill="#6f7f82"/><path d="M10 6l4 2q5-3 10 0l4-2-1 8q-2 7-8 8-6-1-8-8z" fill="#d8dcda"/><circle cx="15" cy="13" r="3" fill="#1b1b1b"/><circle cx="22" cy="13" r="3" fill="#1b1b1b"/><circle cx="15" cy="13" r="1.800" fill="#e8b020"/><circle cx="22" cy="13" r="1.800" fill="#e8b020"/><ellipse cx="18.500" cy="19" rx="2.500" ry="2" fill="#222"/></svg>
    </div>
    <div class="tapps">
      <span class="tc"><svg class="i s16"><use href="#tview"/></svg></span><span class="tc"><svg class="i s22"><use href="#copilot"/></svg></span><span class="tc"><svg class="i s22"><use href="#files"/></svg></span><span class="tc"><svg class="i s22"><use href="#store"/></svg></span><span class="tc"><svg class="i s24"><use href="#mail"/></svg></span><span class="tc"><svg class="i s24"><use href="#outlook"/></svg></span><span class="tc"><svg class="i s24"><use href="#calc"/></svg></span><span class="tc rn"><svg class="i s24"><use href="#chrome"/></svg><svg class="i s16 bdg"><use href="#fstc"/></svg></span><span class="tc rn ac"><svg class="i s18"><use href="#replapp"/></svg><svg class="i s16 bdg"><use href="#fstc"/></svg></span>
    </div>
    <div class="tray">
      <span class="sr">SR</span>
      <svg class="wx" width="24" height="22" viewBox="0 0 24 22"><circle cx="11" cy="11" r="10.500" fill="url(#gSun)"/><path d="M11 18a3.500 3.500 0 0 1 0-7 5 5 0 0 1 9 1 3 3 0 0 1 0 6z" fill="#8fb8f2"/></svg>
      <span class="tmp">26°C</span><span class="ms2">Mostly sunny</span>
      <div class="tis"><svg class="i s16"><use href="#up"/></svg><svg class="i s16"><use href="#cam2"/></svg><svg class="i s18"><use href="#cloud"/></svg><svg class="i s16"><use href="#batt"/></svg><svg class="i s14"><use href="#wifi"/></svg></div>
      <div class="clk"><span>09:20</span><span>6. 8. 2025.</span></div>
      <svg class="i s18 nt"><use href="#notif"/></svg><i class="sep"></i>
    </div>
  </div>
</div>

<!-- ============ Right monitor ============ -->
<div class="screen right">
  <div class="strip">
    <span class="tdd"><svg class="i s12 bold"><use href="#down"/></svg></span>
    <span class="ct t1"><svg class="i s18"><use href="#rcube"/></svg><span class="fd">(19) Roundcube Webmail :: Pristiglo</span><svg class="i s12 w2"><use href="#x"/></svg></span>
    <span class="ct t2"><svg class="i s16"><use href="#globe"/></svg><span class="fd">Frigo Sistem Todosijević - Profesionalni</span><svg class="i s12 w2"><use href="#x"/></svg></span>
    <svg class="i s14 np"><use href="#plus"/></svg>
    <div class="wc2"><svg class="i s12"><use href="#min"/></svg><svg class="i s12"><use href="#restore"/></svg><svg class="i s14"><use href="#x"/></svg></div>
  </div>
  <div class="ctool">
    <svg class="i s16 w2"><use href="#left"/></svg><svg class="i s16 g2 w2"><use href="#right"/></svg><svg class="i s16 w2"><use href="#reload"/></svg><svg class="i s18 w2"><use href="#homec"/></svg>
    <div class="omni"><span class="oi"><svg class="i s14 w2"><use href="#tune"/></svg></span><span class="ou">frigosistemtodosijevic.me<em>/admin/services</em></span><svg class="i s18 w2 oz"><use href="#zoomin"/></svg><svg class="i s18 w2"><use href="#star"/></svg></div>
    <svg class="i s16 ex"><use href="#fstc"/></svg><svg class="i s16"><use href="#vdots"/></svg>
  </div>
  <div class="bms">
    <span><svg class="i s16"><use href="#apps9"/></svg>Апликације</span>
    <span><svg class="i s16 w25"><use href="#grid4"/></svg><i class="bsep"></i></span>
    <span><svg class="i s16"><use href="#globe"/></svg></span>
    <span><svg class="i s18 w2 fo"><use href="#folder"/></svg>Нови директоријум</span>
    <span><svg class="i s16"><use href="#tmob"/></svg>Pozivni centar - poč...</span>
    <span><svg class="i s16"><use href="#globe"/></svg>manusoft login</span>
    <span><svg class="i s16"><use href="#ads"/></svg></span>
    <span><svg class="i s16"><use href="#tmob"/></svg>Login</span>
    <span><svg class="i s16"><use href="#tmob"/></svg>HCC Agent</span>
    <span><svg class="i s16"><use href="#fst"/></svg>WebCentar Admin P...</span>
    <span><svg class="i s16"><use href="#gears"/></svg>Dijelovi za servis + F...</span>
    <span><svg class="i s16"><use href="#globe"/></svg>djelovi za auta</span>
    <span><svg class="i s16"><use href="#globe"/></svg>Genije Pro. Racuni</span>
    <span><svg class="i s16"><use href="#globe"/></svg>Genije Pro.</span>
    <span><svg class="i s16"><use href="#cic"/></svg>wifi ruter</span>
    <span><svg class="i s16"><use href="#calc2"/></svg>Resistor Calculator</span>
    <span><svg class="i s14 w2"><use href="#dbl"/></svg><i class="bsep b2s"></i></span>
    <span><svg class="i s18 w2 fo"><use href="#folder"/></svg>Сви обележивачи</span>
  </div>
  <div class="phead">
    <div class="psearch">Pretraga</div>
    <span class="lo"><svg class="i s18 w2"><use href="#logout"/></svg>Odjavi se</span>
    <span class="jt j1">JT</span>
    <div class="who"><b>Jelena Todosijević</b><small>Administrator</small></div>
    <svg class="i s18 w2 gr"><use href="#gear"/></svg>
  </div>
  <div class="pbody">
    <aside class="psd">
      <h2>Frigo Sistem<br>Todosijević</h2>
      <div class="me"><span class="jt">JT</span><div><b>Jelena Todosijević</b><small>Administrator</small></div></div>
      <nav>
        <a class="bl2">Kontrolna tabla</a><a>Klijenti</a><a class="cur">Servisi<em class="nv">Novo</em></a><a class="bl2">Preuzeti aparati</a><a>Servisi po serviserima</a><a class="bl2">Poslovni partneri<em class="n9">9</em></a><a class="bl2">Rezervni delovi<em class="n9 n2">2</em></a><a class="bl2">Dostupni delovi</a><a class="bl2">PartKeepr Katalog</a><a class="bl2">Web Scraping</a><a>Bela tehnika</a><a>Upravljaj korisnicima</a><a>Verifikuj korisnike<em class="nv">Novo</em></a>
      </nav>
    </aside>
    <div class="sb"><i class="ua"></i><i class="th t454"></i><i class="da"></i></div>
    <main>
      <div class="top">
        <div><h1>Upravljanje servisima</h1><p>Kompletan pregled i upravljanje svim servisima</p></div>
        <span class="bo"><svg class="i s18 w2"><use href="#box"/></svg>Poruči rezervni deo</span>
        <span class="bd"><svg class="i s18 w2"><use href="#plus"/></svg>Dodaj novi servis</span>
      </div>
      <div class="stats">
        <div><span><small>Ukupno</small><b>139</b></span><svg class="i s22 w2"><use href="#wrench"/></svg></div>
        <div class="k1"><span><small>Preuzeti</small><b>0</b></span><svg class="i s22 w2"><use href="#box"/></svg></div>
        <div class="k2"><span><small>Na čekanju</small><b>51</b></span><svg class="i s24 w2"><use href="#clock"/></svg></div>
        <div class="k3"><span><small>U toku</small><b>3</b></span><svg class="i s22 w2"><use href="#play"/></svg></div>
        <div class="k4"><span><small>Završeno</small><b>47</b></span><svg class="i s24 w2"><use href="#okopen"/></svg></div>
        <div class="k5"><span><small>Nedodeljena</small><b>53</b></span><svg class="i s24 w2"><use href="#alert"/></svg></div>
        <div class="k1"><span><small>Poslovni P.</small><b>37</b></span><svg class="i s22 w2"><use href="#build"/></svg></div>
      </div>
      <div class="filt">
        <h5><svg class="i s18 w2"><use href="#funnel"/></svg>Filteri</h5>
        <div class="fg">
          <div><label>Pretraga</label><span class="in sv"><svg class="i s18"><use href="#search"/></svg>vaska</span></div>
          <div><label>Status</label><span class="in">Svi statusi<svg class="i s16 w2"><use href="#down"/></svg></span></div>
          <div><label>Serviser</label><span class="in">Svi serviseri<svg class="i s16 w2"><use href="#down"/></svg></span></div>
          <div><label>Kreirao</label><span class="in">Svi servisi<svg class="i s16 w2"><use href="#down"/></svg></span></div>
          <div><label>Preuzimanje uređaja</label><span class="in">Svi uređaji<svg class="i s16 w2"><use href="#down"/></svg></span></div>
          <div><label>Grad</label><span class="in">Svi gradovi<svg class="i s16 w2"><use href="#down"/></svg></span></div>
          <div><label>Rezultati</label><span class="rz">Prikazano 1 od 139 servisa</span></div>
        </div>
      </div>
      <div class="serv">
        <h6>Servisi</h6>
        <div class="row">
          <div class="pills"><em class="pa">#161</em><em class="pb"><svg class="i s14 w2"><use href="#okopen"/></svg>Završeno</em></div>
          <div class="c"><b>Vaska Mitrevska</b><small><svg class="i s14 w2"><use href="#pin"/></svg>Budva</small></div>
          <div class="c"><span class="gy">Direktan zahtev</span><small><svg class="i s14 w2"><use href="#user"/></svg>Admin kreiran</small></div>
          <div class="c"><span>Mašina za sudove</span><small>Electrolux EEA12100L</small></div>
          <div class="c"><span>Gruica Todosijević</span><small>Mašine za veš i sudove</small></div>
          <div class="c"><span>Ne moze da se upali</span><small>25.07.2025.</small></div>
          <div class="ab"><i class="x1"><svg class="i s14 w2"><use href="#eye"/></svg></i><i class="x2"><svg class="i s14 w2"><use href="#edit"/></svg></i><i class="x3"><svg class="i s14 w2"><use href="#trash"/></svg></i><i class="x4"><svg class="i s14 w2"><use href="#xc"/></svg></i></div>
        </div>
      </div>
    </main>
    <div class="sb"><i class="ua"></i><i class="th t533"></i><i class="da"></i></div>
  </div>
  <div class="foot">© 2025 Frigo Sistem Todosijević. Sva prava zadržana.</div>
  <div class="task">
    <div class="tapps">
      <span class="tc"><svg class="i s16"><use href="#win"/></svg></span><span class="tc"><svg class="i s22"><use href="#tsearch"/></svg></span><span class="tc"><svg class="i s16"><use href="#tview"/></svg></span><span class="tc"><svg class="i s22"><use href="#copilot"/></svg></span><span class="tc"><svg class="i s22"><use href="#files"/></svg></span><span class="tc"><svg class="i s22"><use href="#store"/></svg></span><span class="tc"><svg class="i s24"><use href="#mail"/></svg></span><span class="tc"><svg class="i s24"><use href="#outlook"/></svg></span><span class="tc"><svg class="i s24"><use href="#calc"/></svg></span><span class="tc rn"><svg class="i s24"><use href="#chrome"/></svg><svg class="i s16 bdg"><use href="#fstc"/></svg></span><span class="tc rn ac"><svg class="i s18"><use href="#replapp"/></svg><svg class="i s16 bdg"><use href="#fstc"/></svg></span>
    </div>
    <div class="tray"><div class="clk c2r"><span>09:20</span><span>6. 8. 2025.</span></div></div>
  </div>
</div>
</div>
</body>
</html>
```
FILE: styles.css
```css
*{box-sizing:border-box}
body{margin:0;width:3840px;height:1080px;overflow:hidden;background:#0f0f18;font-family:"Noto Sans","Open Sans",sans-serif}
h1,h2,h3,h4,h5,h6,p,ul{margin:0;padding:0}
i,em{font-style:normal}
.defs{position:absolute}
.desk{display:flex;width:3840px;height:1080px}
.screen{width:1920px;height:1080px;position:relative;display:flex;flex-direction:column;overflow:hidden;white-space:nowrap}
.i{fill:none;stroke:currentColor;stroke-width:1.6;stroke-linecap:round;stroke-linejoin:round;flex:none;display:block;overflow:visible}
.s10{width:10px;height:10px}.s12{width:12px;height:12px}.s14{width:14px;height:14px}.s16{width:16px;height:16px}.s18{width:18px;height:18px}.s22{width:22px;height:22px}.s24{width:24px;height:24px}
.w2{stroke-width:2}.w25{stroke-width:2.500}.bold{stroke-width:3.500}
.c1{color:#8b6cf6}.c2{color:#5ba6bd}.c3{color:#c9b26a}.c4{color:#93b3e0}.c5{color:#6bbf73}
.dim{color:#55555f}.dm{opacity:.55}

/* title bar and workspace header */
.left{background:#0f0f18;color:#e4e4e8}
.tbar{height:26px;flex:none;background:#131418;display:flex;align-items:center;padding-left:8px;font-size:11.300px;color:#fff}
.rlogo{width:12px;height:12px;background:#1c2333;display:flex;align-items:center;justify-content:center;margin-right:7px}
.wc{margin-left:auto;display:flex;align-items:center;padding-right:16px}
.wc svg:nth-child(1){margin-right:24px}.wc svg:nth-child(2){margin-right:25px}.wc svg:nth-child(3){margin-right:37px}.wc svg:nth-child(4){margin-right:34px}.wc svg:nth-child(5){margin-right:33px}
.rhead{height:48px;flex:none;display:flex;align-items:center;position:relative}
.hh{margin-left:16px;color:#c8c8ce}
.plogo{width:20px;height:20px;margin:0 6px 0 19px;background:#06101a;border:1px solid #262630;border-radius:4px;display:flex;align-items:center;justify-content:center}
.pname{font-size:13.500px;width:836px}
.run{display:flex;width:94px;height:32px;border-radius:4px;overflow:hidden;background:#2e2259;font-size:13px;font-weight:600}
.ra{width:26px;display:flex;align-items:center;justify-content:center;color:#9a7dff}
.rb{flex:1;background:#5a38ca;border-radius:4px;display:flex;align-items:center;justify-content:center;color:#e9e2ff}
.ract{margin-left:auto;display:flex;align-items:center;padding-right:18px}
.ms{margin-right:14px}
.rbtn{height:32px;background:#1c1c26;border-radius:4px;display:flex;align-items:center;font-size:13.300px;font-weight:500;position:relative}
.inv{width:78px;padding-left:9px;gap:8px;margin-right:6px}
.red{width:101px;padding-left:9px;gap:8px;border-radius:4px 0 0 4px;margin-right:1px}
.gdot{position:absolute;left:20px;top:7px;width:6px;height:6px;border-radius:50%;background:#1f9e2c}
.doc{width:26px;justify-content:center;border-radius:0 4px 4px 0}
.bl{margin:0 23px 0 14px}
.gt{width:24px;height:24px;border-radius:50%;background:#2b2b36;border:1px solid #3c3c48;font-size:10px;color:#b0b0ba;display:flex;align-items:center;justify-content:center;position:relative}
.gt b{position:absolute;left:-4px;bottom:-3px;width:13px;height:13px;border-radius:50%;background:#5a2b08;color:#ff7a1a;font-size:9px;line-height:13px;text-align:center}
.gc{margin-left:3px;color:#9a9aa4}

.rbody{display:flex;height:966px;flex:none}
.rail{width:48px;display:flex;flex-direction:column;align-items:center;color:#c4c4ca}
.railtop{width:32px;height:32px;border:1px solid #2f2f3a;border-radius:4px;display:flex;align-items:center;justify-content:center;background:#15151f}
.ri{height:36px;width:48px;display:flex;align-items:center;justify-content:center;position:relative}
.rail2 .ri{height:35.500px}
.d::before{content:"";position:absolute;left:10px;top:17px;width:3px;height:3px;border-radius:50%;background:#9a9aa2}
.rail1{margin-top:299px}
.rail hr{width:24px;margin:6px 0 7px;border:0;border-top:1px solid #2f2f3a}
.rail3{margin-top:auto;margin-bottom:6px}

.chat{width:467px;height:958px;background:#1c1c26;border-radius:4px;overflow:hidden;font-size:13.500px;color:#e0e0e6}
.tabs{display:flex;height:32px;background:#171720;align-items:stretch;font-size:13.300px}
.tab{display:flex;align-items:center;gap:6px;padding-left:6px;border-right:1px solid #2a2a35;border-bottom:1px solid #2a2a35;color:#9c9ca6}
.tab.on{background:#1c1c26;border-bottom-color:#1c1c26;color:#f0f0f4}
.a1{width:92px}.a2{width:104px}.a3{width:105px}.a3 svg{margin-right:2px}.a4{flex:1;border-right:0}
.pl{margin-left:8px}
.hist{display:flex;align-items:center;margin:8px 8px 0;height:32px;background:#262630;border-radius:4px;padding:0 8px 0 7px;color:#9a9aa4}
.hist b{font-size:11.500px;letter-spacing:-.15px;font-weight:500;color:#e0e0e6;margin-left:5px;flex:1}
.hg{margin-left:29px}
.act{display:flex;align-items:center;height:20px;padding:0 13px;color:#a6a6b0;font-size:13.500px}
.act span{margin-left:6px}
.act .r{margin-left:auto}
code{font-family:"Liberation Mono",monospace;font-size:13px}
.o1{margin-top:3px}.o2,.o3{margin-top:8px}.o2 .r,.o3 .r,.work .r{margin-right:2px}
.chat p{line-height:22.400px;padding-left:12px;letter-spacing:-.08px}
.p1{margin-top:17px;height:67px}.p2{margin-top:16px;height:22px}.p3{margin-top:17px;height:45px}
.cp{margin:13px 8px 0;height:130px;border:1px solid #2b4238;border-radius:8px;display:flex;padding:12px 0 0 12px;position:relative}
.grn{color:#5fc46d}
.cpt{margin-left:8px;width:302px}
.cpt small{display:block;font-size:11.800px;line-height:20px;color:#a6a6b0;margin-top:-1px}
.cph{line-height:22.400px;margin-top:4px;letter-spacing:-.1px}
.pen{display:inline-block;vertical-align:-2px;margin-left:2px;color:#5c5c66}
.cpb{display:flex;gap:8px;margin-top:9px;font-size:11.500px;font-weight:500}
.cpb span{height:28px;border:1px solid #2f4540;border-radius:4px;display:flex;align-items:center;gap:4px;padding-left:8px}
.b1{width:108px}.b2{width:80px}
.thumb{margin-top:17px}
.work{margin:8px 8px 0;height:36px;border:1px solid #262631;border-radius:8px;display:flex;align-items:center;padding:0 8px 0 12px;gap:8px;font-size:11.800px;color:#a6a6b0}
.work .r{margin-left:auto}
.purple{margin:11px 7px 0;height:199px;background:#2c2744;border-radius:6px;padding:12px 13px;line-height:22.400px;position:relative;box-shadow:-1px 0 0 0 #2c2744}
.purple::before{content:"";position:absolute;left:-1px;top:47px;width:1px;height:45px;background:#6a4fc0}
.purple ul{list-style:none}
.purple li::before{content:"✓";display:inline-block;width:14px;line-height:1}
.purple li{height:22.400px}
.purple div{margin-top:16px}
.queue{margin:15px 8px 0;height:203px;background:#262630;border:1px solid #353541;border-radius:6px;display:flex;flex-direction:column;color:#a6a6b0}
.q1{height:28px;border-bottom:1px solid #353541;display:flex;align-items:center;justify-content:space-between;padding:0 9px 0 14px;font-size:11.600px}
.q1 b{color:#f0f0f4;font-weight:500;display:flex;align-items:center}
.q1 i{border-left:9px solid #f0f0f4;border-top:5px solid transparent;border-bottom:5px solid transparent;margin-right:6px}
.q2{height:42px;display:flex;align-items:center;padding:0 16px 0 10px}
.q2 span{margin:0 8px 0 14px}
.q2 em{height:24px;border-radius:4px;font-size:11.600px;font-weight:500;color:#e8e8ee;background:#2b2b36;display:flex;align-items:center;justify-content:center}
.q2 .can{width:54px;margin-left:auto}.q2 .clr{width:83px;background:#a11b15;margin-left:4px;color:#f6d7d5}
.q3{margin:4px 8px 0 32px;height:36px;border:1px dashed #3f3f4b;border-radius:4px;background:#2b2b36;display:flex;align-items:center;justify-content:space-between;padding:0 9px;letter-spacing:-.1px}
.q3 small{font-size:11.600px;color:#7f7f8a}
.q4{margin-top:17px;border-top:1px solid #353541;flex:1;padding:8px 6px 0 9px;display:flex;flex-direction:column}
.msg{line-height:20px;color:#83838e;padding-left:1px}
.q5{display:flex;align-items:center;margin-top:15px;height:24px;font-size:11.600px}
.tg{margin:0 5px 0 15px}.q5 b{font-weight:500}.sl{margin-left:13px}
.aq{margin-left:auto;width:116px;height:24px;background:#2b2b36;border-radius:4px;display:flex;align-items:center;justify-content:space-between;padding:0 10px 0 9px;color:#8a8a95;font-weight:500}

/* preview pane */
.prev{width:1391px;height:958px;margin-left:6px;background:#1c1c26;border-radius:4px;overflow:hidden}
.prev .tabs{position:relative}
.e1{width:104px}.e2{width:136px}.e3{width:156px}.e4{width:105px;border-top:1px solid #3b6fd6}
.shd{color:#55657f}
.tplus{flex:1;border-bottom:1px solid #2a2a35;display:flex;align-items:center;padding-left:9px;color:#9c9ca6}
.td{position:absolute;right:9px;top:9px;color:#b0b0b8}
.urlb{height:36px;display:flex;align-items:center;padding:0 10px 0 9px;color:#dcdce2}
.urlb>svg:nth-child(2),.urlb>svg:nth-child(3){margin-left:13px}
.g{color:#9a9aa4}
.url{width:1218px;height:24px;background:#262630;border-radius:4px;margin:0 9px 0 8px;display:flex;align-items:center;padding:0 6px 0 3px;color:#9c9ca6;font-size:12.600px}
.url span{margin-left:4px}.url b{font-weight:500;color:#ececf0}.ur{margin-left:auto}
.urlb>svg:nth-child(5){margin-right:10px}.urlb>svg:nth-child(6){margin-right:10px}
.view{height:890px;background:#323232;display:flex;overflow:hidden;border-left:1px solid #3c3c3f;color:#131518}
.side{width:255px;background:#333;border-right:1px solid #2c2c2c;padding:0 0 0 20px}
.side span{display:flex;align-items:center;gap:13px;height:44px;font-size:13px;font-weight:500;color:#0c0e12}
.side span:first-child{margin-top:-18px}
.cards{display:grid;grid-template-columns:repeat(3,350px);grid-template-rows:182px 185px 185px 157px 185px;gap:17px 17.500px;margin:-35px 0 0 25px;height:962px}
.card{border:1px solid #2c2c2c;border-radius:8px;background:#333;padding:24px 23px;font-size:13.200px}
.ch{display:flex;align-items:center;min-height:48px}
.av{width:40px;height:40px;border-radius:50%;background:#0b1133;color:#3f4250;display:flex;align-items:center;justify-content:center;margin-right:12px;flex:none}
.n31{width:31px}.n37{width:37px}
.nm{flex:1}
.nm h4{font-size:16.700px;line-height:28px;font-weight:500;color:#020203}
.nm small{display:block;font-size:13.200px;line-height:20px}
.pn{align-self:flex-start;margin:10px 12px 0 0;color:#020203;stroke-width:2}
.card p{line-height:20px;margin-top:8px}
.ch+p{margin-top:12px}
.card p b{font-weight:500;color:#0b0d10}

/* dialog, toast and activation notice */
.modal{position:absolute;left:967px;top:349px;width:500px;height:476px;background:#fff;border-radius:8px;color:#0c0a09;padding:24px 25.500px;display:flex;flex-direction:column;box-shadow:0 10px 20px rgba(0,0,0,.25)}
.mx{position:absolute;right:18px;top:18px;color:#555;stroke-width:1.800}
.modal h3{font-size:16.300px;line-height:22px;font-weight:500;letter-spacing:-.3px;-webkit-text-stroke:.2px #0c0a09}
.fld{display:flex;flex-direction:column;font-size:13px;height:88px;flex:1}
.modal>.fld,.two{flex:none}
.modal h3+.fld{margin-top:16px}
.fld label{font-weight:500;line-height:20px;height:29px}
.fld span{height:40px;border:1px solid #e5e5e5;border-radius:6px;display:flex;align-items:center;padding:1px 0 0 11px}
.two{display:flex;gap:16px}
.modal button{align-self:flex-end;margin-top:-3px;width:128px;height:40px;border:0;border-radius:6px;background:#2a3041;color:#fff;font:600 12.800px "Noto Sans",sans-serif;padding:0}
.toast{position:absolute;left:1508px;top:902px;width:388px;height:114px;background:#e74d48;border-radius:6px;color:#fdf5f5;padding:25px;font-size:13px;line-height:20px;box-shadow:0 8px 16px rgba(0,0,0,.15)}
.toast b{display:block;font-weight:600;font-size:12.700px;margin-bottom:4px}
.toast span{font-weight:500;opacity:.9}
.wm{position:absolute;left:1490px;top:944px;color:rgba(160,160,160,.62);display:flex;flex-direction:column}
.wm span{font-size:18.500px;line-height:26px}.wm small{font-size:13.800px;line-height:20px}

/* taskbar */
.task{height:40px;flex:none;margin-top:auto;display:flex;background:linear-gradient(90deg,#3f3a2f 0,#3c372b 20%,#3b3b2e 36%,#382e24 47%,#3d3a2d 57%,#383025 67%,#3a3a2e 75%,#39392c 84%,#2d3638 90%,#26282c 95%,#26282b);color:#fff}
.tc{width:49.100px;display:flex;align-items:center;justify-content:center;position:relative}
.w48{width:48px}
.tsb{width:288px;background:#f2f2f2;border:1px solid #c8c8c8;color:#222;display:flex;align-items:center;font-size:14.200px;padding-left:11px;overflow:hidden}
.tsb span{margin-left:10px;width:176px}
.lemur{display:block;flex:none}
.tapps{display:flex}
.bdg{position:absolute;left:24px;top:17px;width:13px;height:16px}
.rn::after{content:"";position:absolute;left:4px;right:4px;bottom:0;height:2px;background:#76b9ed}
.ac{background:#69655a}.ac::after{left:0;right:0}
.tray{margin-left:auto;display:flex;align-items:center;font-size:13.500px}
.sr{font-size:12px;width:63px;margin-top:-6px}
.wx{margin-right:6px}.tmp{width:38px}.ms2{width:104px}
.tis{display:flex;gap:8px;align-items:center;width:118px}
.clk{width:68px;font-size:11.500px;line-height:18px;text-align:center}
.clk span{display:block}
.nt{margin-left:12px}.sep{width:1px;height:40px;background:#77797b;margin:0 3px 0 19px}

/* browser window */
.right{background:#fff;color:#0c0a09}
.strip{height:40px;flex:none;background:#dde2ea;display:flex;align-items:center;padding-left:6px;font-size:11.600px;color:#3c4043}
.tdd{width:28px;height:28px;background:#fff;border-radius:9px;display:flex;align-items:center;justify-content:center;color:#222}
.ct{display:flex;align-items:center}
.fd{overflow:hidden;width:167px;-webkit-mask-image:linear-gradient(90deg,#000 86%,transparent);mask-image:linear-gradient(90deg,#000 86%,transparent)}
.t1{width:230px;margin-left:13px;gap:7px}
.t1 .fd{margin-right:4px}
.t2{height:34px;align-self:flex-end;width:232px;margin-left:1px;background:#fff;border-radius:9px 9px 0 0;padding-left:8px;gap:8px;color:#1f1f1f;position:relative}
.t2::before,.t2::after{content:"";position:absolute;bottom:0;width:9px;height:9px}
.t2::before{left:-9px;background:radial-gradient(circle at 0 0,transparent 8.500px,#fff 9px)}
.t2::after{right:-9px;background:radial-gradient(circle at 100% 0,transparent 8.500px,#fff 9px)}
.t2 .fd{margin-right:3px}
.np{margin-left:13px;stroke-width:2.200}
.wc2{margin-left:auto;display:flex;gap:34px;padding-right:16px;color:#85888d}
.ctool{height:40px;flex:none;display:flex;align-items:center;padding:6px 14px 0 14px;color:#44474a;position:relative}
.ctool>svg:nth-child(2),.ctool>svg:nth-child(3){margin-left:20px}.ctool>svg:nth-child(4){margin-left:19px}
.g2{color:#a8abae}
.omni{width:1680px;height:34px;border-radius:17px;background:#ebf0f9;margin-left:17px;display:flex;align-items:center;padding:0 15px 0 4px}
.oi{width:25px;height:25px;border-radius:50%;background:#fff;display:flex;align-items:center;justify-content:center}
.ou{font-size:13.200px;color:#1f1f1f;margin-left:8px;letter-spacing:-.1px}.ou em{color:#5a5d61}
.oz{margin:0 14px 0 auto}
.ex{margin:0 28px 0 18px}
.bms{height:41px;flex:none;border-bottom:1px solid #dcdfe3;display:grid;align-items:center;padding-left:18px;font-size:11.500px;color:#3f4246;grid-template-columns:102px 46px 33px 150px 154px 118px 32px 68px 97px 154px 154px 115px 134px 96px 86px 178px 47px 130px}
.bms span{display:flex;align-items:center;gap:6px;position:relative}
.fo{margin:0 -1px}
.bsep{width:2px;height:16px;background:#c5dbf7;margin-left:8px}.b2s{margin-left:10px}
.phead{height:70px;flex:none;display:flex;align-items:center}
.psearch{margin-left:357px;width:845px;height:44px;background:#f3f4f5;border:1px solid #e5e7ea;border-radius:6px;font-size:14.500px;color:#78716c;line-height:44px;padding-left:44px}
.lo{margin-left:339px;width:118px;height:40px;border:1px solid #e5e5e5;border-radius:6px;display:flex;align-items:center;padding-left:13px;gap:8px;font-size:14.300px;font-weight:500}
.jt{width:44px;height:44px;border-radius:50%;background:#0f172a;color:#fff;font-size:14.500px;font-weight:500;display:flex;align-items:center;justify-content:center}
.j1{width:35px;height:35px;margin-left:31px}
.who{margin-left:9px;width:138px}.who b{display:block;font-weight:500;font-size:14.300px;line-height:20px}.who small{display:block;font-size:12.400px;line-height:18px;color:#6b7280;font-weight:500}
.pbody{display:flex;height:849px;flex:none}
.psd{width:267px;overflow:hidden}
.psd h2{height:62px;border-bottom:1px solid #e3e4e6;font-size:20.200px;line-height:30.500px;font-weight:500;padding:1px 0 0 18px;color:#111827}
.me{display:flex;align-items:center;height:86px;padding-left:18px;gap:13px;color:#1f2937}
.me b{display:block;font-weight:500;font-size:16.300px;line-height:24px}.me small{display:block;font-size:14.500px;line-height:20px;color:#6b7280}
nav{margin-top:7.500px}
nav a{display:flex;align-items:center;height:52.750px;padding-left:32px;font-size:16.500px;color:#4b5563}
nav .bl2{color:#2553d8;font-weight:500;font-size:16.300px}
nav .cur{background:#eff6ff;border-left:4px solid #0f172a;padding-left:31px;color:#1f2937}
.nv{margin-left:9px;width:49px;height:26px;border-radius:4px;background:#dbe9fd;color:#2a49b8;font-size:12.400px;display:flex;align-items:center;justify-content:center}
.n9{margin-left:9px;width:25px;height:27px;border-radius:4px;background:#ab60f5;color:#fff;font-size:12.400px;font-weight:600;display:flex;align-items:center;justify-content:center}
.n2{background:#ea4a4e}
.sb{width:15.500px;background:#fafafa;display:flex;flex-direction:column;align-items:center;padding:7px 0}
.ua{border:5px solid transparent;border-top:0;border-bottom:5px solid #8b8b8b}
.da{border:5px solid transparent;border-bottom:0;border-top:5px solid #8b8b8b;margin-top:auto}
.th{width:9px;border-radius:5px;background:#8b8b8b;margin-top:6px}
.t454{height:454px}.t533{height:533px}
main{width:1622px;background:#f9fafc;padding:25px 17px 0;overflow:hidden}
.top{display:flex;height:100px;align-items:flex-start}
.top>div{flex:1}
h1{font-size:30.800px;line-height:46px;font-weight:700}
.top p{font-size:16.400px;line-height:28px;color:#78716c}
.bo,.bd{height:44px;margin-top:15px;border-radius:6px;color:#fff;font-size:14.200px;font-weight:600;display:flex;align-items:center}
.bo{width:196px;background:#e45413;padding-left:17px;gap:9px}
.bd{width:190px;background:#0f172a;margin-left:13px;padding-left:18px;gap:17px}
.stats{display:grid;grid-template-columns:repeat(7,1fr);gap:9.700px;height:67px}
.stats>div,.filt,.serv,.row{background:#fff;border:1px solid #e5e5e7;border-radius:8px;box-shadow:0 1px 2px rgba(0,0,0,.05)}
.stats>div{display:flex;align-items:center;justify-content:space-between;padding:0 9px}
.stats small{display:block;font-size:12.400px;line-height:18px;color:#78716c}
.stats b{display:block;font-size:18.600px;line-height:30px;font-weight:700}
.k1 svg{color:#2563eb}.k2 svg{color:#f97316}.k3 svg{color:#3b82f6}.k4 svg{color:#3fc468}.k5 svg{color:#ef4444}
.filt{margin-top:17px;height:174px;padding:0 26px}
.filt h5{display:flex;align-items:center;gap:9px;font-size:14.300px;font-weight:500;line-height:20px;padding-top:28px}
.fg{display:grid;grid-template-columns:repeat(7,207px);gap:13.900px;margin-top:21px}
.fg label{display:block;font-size:14.400px;font-weight:500;line-height:24px}
.in{margin-top:9px;height:43px;border:1px solid #e5e5e5;border-radius:6px;display:flex;align-items:center;justify-content:space-between;padding:1px 14px;font-size:14.500px}
.in svg{color:#8a8580}
.sv{justify-content:flex-start;gap:13px;padding-left:12px}.sv svg{stroke-width:1.800}
.rz{display:block;margin-top:18px;font-size:14.500px;line-height:22px;color:#78716c}
.serv{margin-top:17px;height:520px;padding:0 26px}
h6{font-size:18.300px;font-weight:500;line-height:28px;padding-top:29px}
.row{margin-top:14px;height:67px;display:flex;align-items:center;padding-left:13px}
.pills{display:flex;gap:8px;width:234px}
.pills em{height:24px;border-radius:12px;display:flex;align-items:center;justify-content:center;font-size:12.200px;font-weight:600}
.pills .pa{width:50px;border:1px solid #e5e5e5;font-weight:500}.pb{width:97px;background:#0f172a;color:#fff;gap:4px}
.c{width:234px;font-size:14.500px}
.c b{font-weight:500;display:block;line-height:20px}.c span{display:block;line-height:20px}.c .gy{color:#78716c}
.c small{display:flex;align-items:center;gap:4px;font-size:12.400px;line-height:19px;color:#78716c}
.ab{display:flex;gap:4.400px}
.ab i{width:22px;height:22px;border-radius:4px;color:#fff;display:flex;align-items:center;justify-content:center}
.x1{background:#3f83f5}.x2{background:#3fc363}.x3{background:#ea3f43}.x4{background:#f37020}
.foot{position:absolute;left:1570px;top:998px;width:339px;height:31px;background:rgba(255,255,255,.92);border-radius:4px;box-shadow:0 1px 3px rgba(0,0,0,.08);font:13.300px/31px "Liberation Sans",sans-serif;color:#4f86b8;text-align:center}
```
